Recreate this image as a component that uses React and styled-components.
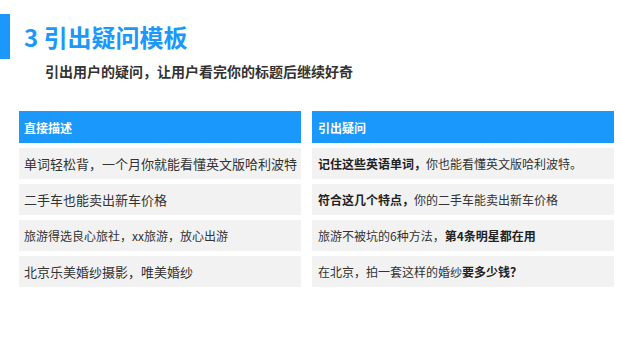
import React from "react";
import styled, { createGlobalStyle } from "styled-components";

const Global = createGlobalStyle`
  html, body { margin: 0; padding: 0; background: #fff; }
  body { font-family: "Microsoft YaHei", "Noto Sans CJK SC", "Noto Sans", sans-serif; }
`;

const Page = styled.div`
  width: 640px;
  height: 345px;
  overflow: hidden;
  background: #fff;
  padding-top: 14px;
  box-sizing: border-box;
`;

const TitleRow = styled.div`
  display: flex;
  align-items: center;
  height: 45px;
  gap: 14px;
`;

const Accent = styled.div`
  width: 10px;
  height: 100%;
  background: #1a98fb;
`;

const Title = styled.h1`
  margin: 0;
  font-size: 24px;
  font-weight: 700;
  color: #1a98fb;
  letter-spacing: 0;
  line-height: 1;
`;

const Subtitle = styled.p`
  margin: 3px 0 0 45px;
  font-size: 14px;
  font-weight: 700;
  color: #333;
  line-height: 18px;
`;

const Table = styled.div`
  display: grid;
  grid-template-columns: 282px 302px;
  column-gap: 11px;
  margin: 31px 0 0 19px;
`;

const Column = styled.div`
  display: flex;
  flex-direction: column;
  gap: 5px;
`;

const Header = styled.div`
  height: 32px;
  background: #1a98fb;
  color: #fff;
  font-size: 12px;
  font-weight: 700;
  display: flex;
  align-items: center;
  padding-left: ${(p) => p.$pad}px;
`;

const Cell = styled.div`
  height: 31px;
  background: #f2f2f2;
  color: #333;
  font-size: ${(p) => p.$size}px;
  display: flex;
  align-items: center;
  padding-left: ${(p) => p.$pad}px;
  white-space: nowrap;
  & b { font-weight: 700; color: #222; }
`;

const left = [
  { size: 13, c: <>单词轻松背，一个月你就能看懂英文版哈利波特</> },
  { size: 13, c: <>二手车也能卖出新车价格</> },
  { size: 12, c: <>旅游得选良心旅社，xx旅游，放心出游</> },
  { size: 13, c: <>北京乐美婚纱摄影，唯美婚纱</> },
];

const right = [
  { size: 12, c: <><b>记住这些英语单词，</b>你也能看懂英文版哈利波特。</> },
  { size: 12, c: <><b>符合这几个特点，</b>你的二手车能卖出新车价格</> },
  { size: 12, c: <>旅游不被坑的6种方法，<b>第4条明星都在用</b></> },
  { size: 12, c: <>在北京，拍一套这样的婚纱<b>要多少钱？</b></> },
];

export default function App() {
  return (
    <Page>
      <Global />
      <TitleRow>
        <Accent />
        <Title>3 引出疑问模板</Title>
      </TitleRow>
      <Subtitle>引出用户的疑问，让用户看完你的标题后继续好奇</Subtitle>
      <Table>
        <Column>
          <Header $pad={5}>直接描述</Header>
          {left.map((r, i) => (
            <Cell key={i} $size={r.size} $pad={5}>{r.c}</Cell>
          ))}
        </Column>
        <Column>
          <Header $pad={6}>引出疑问</Header>
          {right.map((r, i) => (
            <Cell key={i} $size={r.size} $pad={6}>{r.c}</Cell>
          ))}
        </Column>
      </Table>
    </Page>
  );
}
